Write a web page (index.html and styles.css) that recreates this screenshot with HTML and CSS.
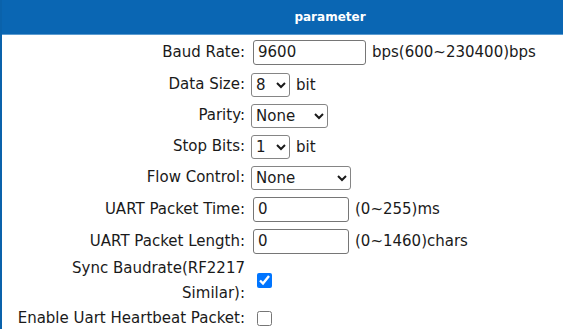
FILE: index.html
```html
<!DOCTYPE html>
<html lang="en">
<head>
<meta charset="UTF-8">
<title>Serial parameter</title>
<link rel="stylesheet" href="styles.css">
</head>
<body>

<div class="panel">
  <div class="panel-title">parameter</div>
  <div class="form">
    <label class="label">Baud Rate:</label>
    <div class="field">
      <input class="text wide" type="text" value="9600">
      <span class="hint">bps(600~230400)bps</span>
    </div>

    <label class="label">Data Size:</label>
    <div class="field">
      <select class="sel small"><option>8</option><option>7</option></select>
      <span class="hint">bit</span>
    </div>

    <label class="label">Parity:</label>
    <div class="field">
      <select class="sel mid"><option>None</option><option>Odd</option><option>Even</option></select>
    </div>

    <label class="label">Stop Bits:</label>
    <div class="field">
      <select class="sel small"><option>1</option><option>2</option></select>
      <span class="hint">bit</span>
    </div>

    <label class="label">Flow Control:</label>
    <div class="field">
      <select class="sel large"><option>None</option><option>RTS/CTS</option></select>
    </div>

    <label class="label">UART Packet Time:</label>
    <div class="field">
      <input class="text" type="text" value="0">
      <span class="hint">(0~255)ms</span>
    </div>

    <label class="label">UART Packet Length:</label>
    <div class="field">
      <input class="text" type="text" value="0">
      <span class="hint">(0~1460)chars</span>
    </div>

    <label class="label">Sync Baudrate(RF2217<br>Similar):</label>
    <div class="field">
      <input class="check" type="checkbox" checked>
    </div>

    <label class="label">Enable Uart Heartbeat Packet:</label>
    <div class="field">
      <input class="check" type="checkbox">
    </div>
  </div>
</div>

</body>
</html>
```

FILE: styles.css
```css
body {
  margin: 0;
  background-color: #fff;
  color: #1a1a1a;
  font-family: "DejaVu Sans", Verdana, sans-serif;
  font-size: 15px;
  overflow: hidden;
}
.panel {
  width: 656px;
  border-left: 2px solid #0a62ab;
}
.panel-title {
  height: 34px;
  line-height: 34px;
  background-color: #0a66b3;
  border-bottom: 1px solid #5b9bd0;
  color: #fff;
  text-align: center;
  font-size: 12px;
  font-weight: bold;
}
.form {
  display: grid;
  grid-template-columns: 243px 1fr;
  grid-template-rows: 34px 31px 31px 31px 31px 32px 32px 47px 28px;
  column-gap: 6px;
  align-items: center;
}
.label {
  text-align: right;
  line-height: 25px;
}
.field {
  display: flex;
  align-items: center;
  gap: 6px;
}
.text {
  width: 96px;
  height: 25px;
  box-sizing: border-box;
  border: 1px solid #767676;
  border-radius: 3px;
  padding: 0 4px;
  font-family: inherit;
  font-size: 15px;
  color: #1a1a1a;
  margin: 0 0 0 2px;
}
.text.wide {
  width: 113px;
}
.hint {
  margin-left: 0;
}
.sel {
  height: 24px;
  box-sizing: border-box;
  border: 1px solid #858585;
  border-radius: 3px;
  font-family: inherit;
  font-size: 15px;
  color: #1a1a1a;
  background-color: #fff;
  margin: 0;
}
.sel.small {
  width: 39px;
}
.sel.mid {
  width: 77px;
}
.sel.large {
  width: 100px;
}
.check {
  width: 15px;
  height: 15px;
  margin: 0 0 0 6px;
  accent-color: #0075ff;
}
```
